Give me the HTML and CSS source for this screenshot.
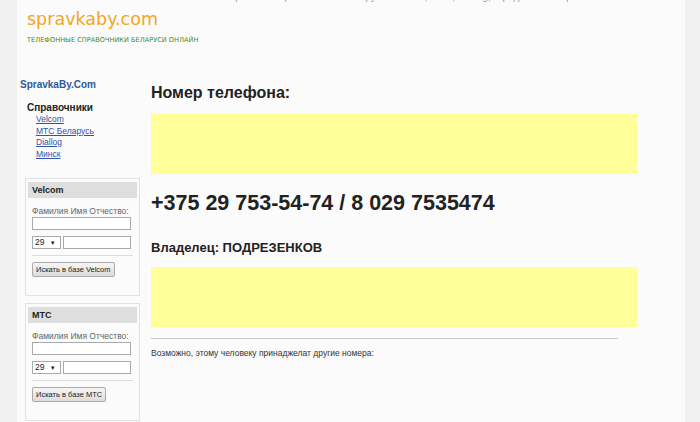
FILE: index.html
```html
<!DOCTYPE html>
<html lang="ru">
<head>
  <meta charset="UTF-8" />
  <title>Номер телефона +375 29 753-54-74 | spravkaby.com</title>
  <link rel="stylesheet" href="styles.css">
</head>
<body>
  <div class="wrap">
    <div class="topline">Поиск по телефонным справочникам Беларуси: Velcom, МТС, Diallog, городские номера Минска</div>

    <header>
      <div class="logo">spravkaby.com</div>
      <div class="slogan">Телефонные справочники Беларуси онлайн</div>
    </header>

    <div class="page">
      <aside class="sidebar">
        <div class="site-name">SpravkaBy.Com</div>
        <div class="menu">
          <h4>Справочники</h4>
          <ul>
            <li><a href="#">Velcom</a></li>
            <li><a href="#">МТС Беларусь</a></li>
            <li><a href="#">Diallog</a></li>
            <li><a href="#">Минск</a></li>
          </ul>
        </div>

        <div class="search-box">
          <div class="box-title">Velcom</div>
          <label>Фамилия Имя Отчество:</label>
          <input type="text" class="fio">
          <div class="phone-row">
            <span class="code">29 <i>▼</i></span>
            <input type="text" class="num">
          </div>
          <hr>
          <button>Искать в базе Velcom</button>
        </div>

        <div class="search-box">
          <div class="box-title">МТС</div>
          <label>Фамилия Имя Отчество:</label>
          <input type="text" class="fio">
          <div class="phone-row">
            <span class="code">29 <i>▼</i></span>
            <input type="text" class="num">
          </div>
          <hr>
          <button>Искать в базе МТС</button>
        </div>
      </aside>

      <main class="content">
        <h2>Номер телефона:</h2>
        <div class="ad"></div>
        <h1>+375 29 753-54-74 / 8 029 7535474</h1>
        <h3>Владелец: ПОДРЕЗЕНКОВ</h3>
        <div class="ad ad-low"></div>
        <hr>
        <p class="more">Возможно, этому человеку принаджелат другие номера:</p>
      </main>
    </div>
  </div>
</body>
</html>
```

FILE: styles.css
```css
* { box-sizing: border-box; margin: 0; padding: 0; }
body { background: #f1f1f1; font-family: 'Liberation Sans', Arial, sans-serif; color: #222; }
.wrap { width: 668px; margin-left: 17px; background: #fbfbfb; min-height: 440px; }

/* строка над логотипом, видны только хвосты букв */
.topline { font-size: 10px; line-height: 10px; height: 10px; margin-top: -8px; color: #999; padding-left: 150px; white-space: nowrap; overflow: hidden; }

header { padding: 6px 0 0 10px; height: 71px; }
.logo { font-family: 'DejaVu Sans', Verdana, sans-serif; font-size: 17.5px; color: #f4a524; line-height: 22px; }
.slogan { font-family: 'DejaVu Sans', Verdana, sans-serif; font-size: 6.6px; text-transform: uppercase; color: #3d8b1f; margin-top: 6px; }

.page { display: flex; }
.sidebar { width: 123px; padding-left: 3px; }
.site-name { font-size: 10px; font-weight: bold; color: #2b5c9c; margin-top: 6px; }
.menu { padding: 12px 0 0 7px; }
.menu h4 { font-size: 10px; font-weight: bold; color: #222; margin-bottom: 1px; }
.menu ul { list-style: none; padding-left: 9px; }
.menu li { font-size: 8.5px; line-height: 11.5px; }
.menu a { color: #3452a8; }

.search-box { margin: 18px 0 0 5px; width: 115px; border: 1px solid #e2e2e2; padding: 3px 2px 18px; font-size: 8.5px; }
.search-box + .search-box { margin-top: 7px; }
.box-title { background: #dedede; font-weight: bold; font-size: 9px; padding: 3px 4px; height: 16px; margin-bottom: 8px; }
.search-box label { display: block; color: #666; padding-left: 4px; margin-bottom: 1px; }
.search-box input { border: 1px solid #aaa; background: #fff; height: 13px; }
.fio { display: block; width: 99px; margin-left: 4px; }
.phone-row { display: flex; gap: 2px; margin: 6px 0 0 4px; }
.code { width: 29px; height: 13px; border: 1px solid #aaa; background: #fff; font-size: 8.5px; line-height: 11px; padding-left: 2px; }
.code i { font-style: normal; font-size: 6px; margin-left: 3px; }
.num { width: 68px; }
.search-box hr { border: 0; border-top: 1px solid #ddd; margin: 6px 4px 6px 4px; }
.search-box button { margin-left: 4px; font-family: inherit; font-size: 7.5px; height: 15px; padding: 0 3px; border: 1px solid #aaa; border-radius: 2px; background: linear-gradient(#f6f6f6, #dcdcdc); color: #222; }

.content { width: 486px; margin-left: 11px; }
.content h2 { font-size: 16px; font-weight: bold; margin-top: 11px; line-height: 18px; }
.ad { height: 60px; background: #ffff99; margin-top: 12px; }
.content h1 { font-size: 21.5px; font-weight: bold; margin-top: 16px; line-height: 26px; }
.content h3 { font-size: 13px; font-weight: bold; margin-top: 24px; line-height: 15px; }
.ad-low { margin-top: 12px; }
.content hr { border: 0; border-top: 1px solid #ccc; width: 467px; margin-top: 11px; }
.more { font-size: 8.5px; color: #333; margin-top: 9px; }
```
